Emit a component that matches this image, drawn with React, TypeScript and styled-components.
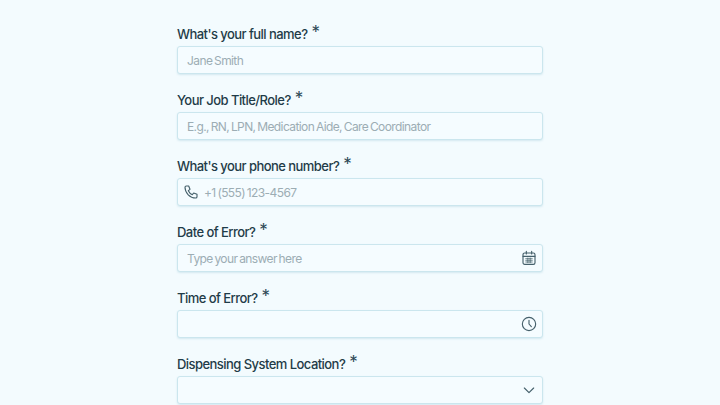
import { ReactNode } from 'react';
import styled, { createGlobalStyle } from 'styled-components';

const GlobalStyle = createGlobalStyle`
  html, body {
    margin: 0;
    height: 100%;
    overflow: hidden;
    background: #f3fbfe;
  }
`;

const Page = styled.div`
  width: 720px;
  height: 405px;
  overflow: hidden;
  padding-top: 25px;
  box-sizing: border-box;
  background: #f3fbfe;
  font-family: Inter, 'Noto Sans', sans-serif;
`;

const Form = styled.form`
  display: flex;
  flex-direction: column;
  gap: 17px;
  width: 366px;
  margin: 0 auto;
`;

const Field = styled.div`
  display: flex;
  flex-direction: column;
`;

const Label = styled.label`
  display: flex;
  align-items: flex-start;
  height: 21px;
  font-size: 13px;
  font-weight: 500;
  letter-spacing: -0.55px;
  line-height: 18px;
  color: #1f3b48;
`;

const Star = styled.span`
  margin-left: 4px;
  font-size: 17px;
  font-weight: 400;
  letter-spacing: 0;
  line-height: 15px;
  color: #2c4855;
`;

const InputBox = styled.div<{ $leading?: boolean }>`
  display: flex;
  align-items: center;
  gap: 5px;
  height: 28px;
  padding: 0 5px 0 ${(p) => (p.$leading ? '5px' : '9px')};
  box-sizing: border-box;
  background: #f5fcff;
  border: 1px solid #cbe6ee;
  border-radius: 3px;
  box-shadow: 0 1px 2px rgba(90, 160, 185, 0.2);
`;

const Input = styled.input`
  flex: 1;
  min-width: 0;
  padding: 0;
  border: 0;
  outline: 0;
  background: transparent;
  font: inherit;
  font-size: 12px;
  letter-spacing: -0.6px;
  word-spacing: -1px;
  color: #1f3b48;

  &::placeholder {
    color: #9cadb4;
    opacity: 1;
  }
`;

const Icon = styled.svg`
  flex: none;
  width: 16px;
  height: 16px;
  fill: none;
  stroke: #45606b;
  stroke-width: 1.7;
  stroke-linecap: round;
  stroke-linejoin: round;
`;

const PhoneIcon = () => (
  <Icon viewBox="0 0 24 24">
    <path d="M5 3h3.5l2 5-2.5 2a12 12 0 0 0 6 6l2-2.5 5 2V19a2 2 0 0 1-2 2C10.5 21 3 13.5 3 5a2 2 0 0 1 2-2z" />
  </Icon>
);

const CalendarIcon = () => (
  <Icon viewBox="0 0 24 24">
    <rect x="3" y="4.5" width="18" height="17" rx="2.5" />
    <path d="M8 2v4M16 2v4M3 9.5h18" />
    <path d="M7 13h10M7 15.5h10M7 18h10M9.5 12v7M12 12v7M14.5 12v7" strokeWidth="1" />
  </Icon>
);

const ClockIcon = () => (
  <Icon viewBox="0 0 24 24">
    <circle cx="12" cy="12" r="10" />
    <path d="M12 6.5V12l3.5 4" />
  </Icon>
);

const ChevronIcon = () => (
  <Icon viewBox="0 0 24 24">
    <path d="M5 9l7 7 7-7" />
  </Icon>
);

type RowProps = {
  label: string;
  placeholder?: string;
  before?: ReactNode;
  after?: ReactNode;
};

const Row = ({ label, placeholder, before, after }: RowProps) => (
  <Field>
    <Label>
      {label}
      <Star>*</Star>
    </Label>
    <InputBox $leading={!!before}>
      {before}
      <Input placeholder={placeholder} aria-label={label} />
      {after}
    </InputBox>
  </Field>
);

const App = () => (
  <Page>
    <GlobalStyle />
    <Form>
      <Row label="What's your full name?" placeholder="Jane Smith" />
      <Row label="Your Job Title/Role?" placeholder="E.g., RN, LPN, Medication Aide, Care Coordinator" />
      <Row label="What's your phone number?" placeholder="+1 (555) 123-4567" before={<PhoneIcon />} />
      <Row label="Date of Error?" placeholder="Type your answer here" after={<CalendarIcon />} />
      <Row label="Time of Error?" after={<ClockIcon />} />
      <Row label="Dispensing System Location?" after={<ChevronIcon />} />
    </Form>
  </Page>
);

export default App;
